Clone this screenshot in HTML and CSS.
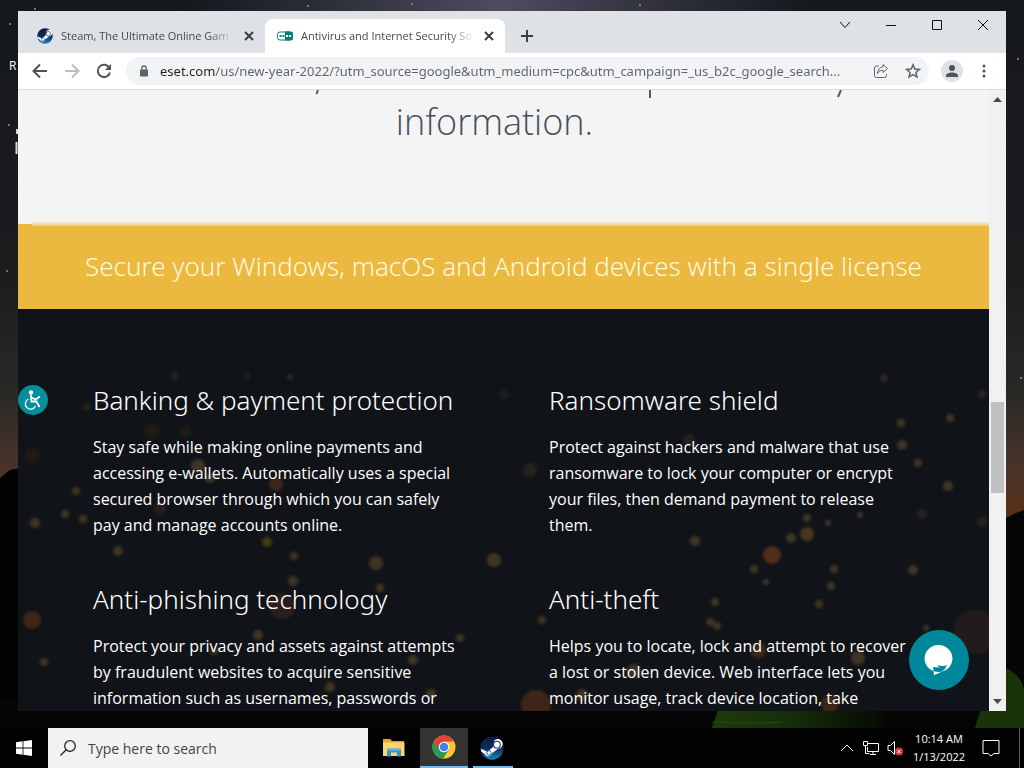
FILE: index.html
```html
<!DOCTYPE html>
<html lang="en">
<head>
    <meta charset="UTF-8">
    <meta name="viewport" content="width=device-width, initial-scale=1.0">
    <title>Antivirus and Internet Security</title>
    <link rel="stylesheet" href="styles.css">
</head>
<body>
    <div class="desktop">
        <!-- Wallpaper -->
        <svg class="wallpaper" viewBox="0 0 1024 768" preserveAspectRatio="none" aria-hidden="true">
            <defs>
                <linearGradient id="sky" x1="0" y1="0" x2="0" y2="1">
                    <stop offset="0" stop-color="#14171c"/>
                    <stop offset="0.35" stop-color="#1b1c1e"/>
                    <stop offset="0.52" stop-color="#2b2926"/>
                    <stop offset="0.61" stop-color="#49342a"/>
                    <stop offset="0.68" stop-color="#5a3013"/>
                </linearGradient>
                <linearGradient id="haze" x1="0" y1="0" x2="1" y2="0">
                    <stop offset="0" stop-color="#4a4658" stop-opacity="0"/>
                    <stop offset="0.5" stop-color="#504c60"/>
                    <stop offset="1" stop-color="#4a4658" stop-opacity="0"/>
                </linearGradient>
                <linearGradient id="tent" x1="0" y1="0" x2="1" y2="0">
                    <stop offset="0" stop-color="#1d3b09"/>
                    <stop offset="0.4" stop-color="#16300a"/>
                    <stop offset="1" stop-color="#060a04"/>
                </linearGradient>
            </defs>
            <rect width="1024" height="768" fill="url(#sky)"/>
            <rect x="180" width="640" height="11" fill="url(#haze)"/>
            <path d="M0 478 10 470 20 468V768H0Z" fill="#030303"/>
            <path d="M1006 518 1016 513 1024 510V768H0V700H1006Z" fill="#040504"/>
            <path d="M718 710H886V728H712Z" fill="url(#tent)"/>
            <path d="M712 722q40 2 70 0" stroke="#2c4a12" fill="none"/>
            <path d="M975 728Q985 690 1006 668Q1022 676 1024 690V728Z" fill="#1a3309"/>
            <g fill="#8d93a0">
                <circle cx="35" cy="9" r="1"/><circle cx="10" cy="24" r="1"/><circle cx="9" cy="125" r="1"/>
                <circle cx="308" cy="6" r="1"/><circle cx="412" cy="4" r="1"/><circle cx="640" cy="5" r="1"/>
                <circle cx="1018" cy="59" r="1"/><circle cx="7" cy="271" r="1"/><circle cx="1021" cy="378" r="1"/>
            </g>
            <path d="M17 129v5M16.500 142v12" stroke="#d8d8d8" stroke-width="2"/>
        </svg>
        <span class="desktop-label">R</span>

        <div class="window">
            <header class="tab-strip">
                <div class="tab">
                    <svg class="favicon" viewBox="0 0 32 32" aria-hidden="true"><use href="#steam"/></svg>
                    <button class="tab-title">Steam, The Ultimate Online Gam</button>
                    <button class="tab-close" aria-label="Close tab"><svg viewBox="0 0 10 10"><path d="M1 1l8 8M9 1L1 9"/></svg></button>
                </div>
                <div class="tab tab-active">
                    <svg class="favicon" viewBox="0 0 16 16" aria-hidden="true">
                        <rect x="0.500" y="4" width="15" height="8" rx="2.500" fill="#fff" stroke="#0b7f6e"/>
                        <path d="M8 3.500h5.500a2.500 2.500 0 0 1 2.500 2.500v4a2.500 2.500 0 0 1-2.500 2.500H8z" fill="#0b7f6e"/>
                        <path d="M2.500 8h2M5.500 8h2" stroke="#0b7f6e" stroke-width="2"/>
                        <path d="M9 8h2M12 8h2" stroke="#fff" stroke-width="2"/>
                    </svg>
                    <button class="tab-title">Antivirus and Internet Security So</button>
                    <button class="tab-close" aria-label="Close tab"><svg viewBox="0 0 10 10"><path d="M1 1l8 8M9 1L1 9"/></svg></button>
                </div>
                <button class="new-tab" aria-label="New tab"><svg viewBox="0 0 12 12"><path d="M6 0v12M0 6h12"/></svg></button>
                <div class="window-controls">
                    <button aria-label="Search tabs"><svg viewBox="0 0 12 12"><path d="M1 3l5 5.500L11 3"/></svg></button>
                    <button aria-label="Minimize"><svg viewBox="0 0 12 12"><path d="M1 6.500h10"/></svg></button>
                    <button aria-label="Maximize"><svg viewBox="0 0 12 12"><path d="M1.500 1.500h9v9h-9z"/></svg></button>
                    <button aria-label="Close"><svg viewBox="0 0 12 12"><path d="M1 1l10 10M11 1L1 11"/></svg></button>
                </div>
            </header>

            <div class="toolbar">
                <button class="tool" aria-label="Back"><svg viewBox="0 0 16 16"><path d="M15 8H2M8 1.500L1.500 8 8 14.500"/></svg></button>
                <button class="tool tool-disabled" aria-label="Forward"><svg viewBox="0 0 16 16"><path d="M1 8h13M8 1.500L14.500 8 8 14.500"/></svg></button>
                <button class="tool" aria-label="Reload"><svg viewBox="0 0 16 16"><path d="M13.500 5A6.200 6.200 0 1 0 14 9.500"/><path d="M15 1v6H9z" fill="#4f5357" stroke="none"/></svg></button>
                <div class="address">
                    <svg class="lock" viewBox="0 0 10 12" aria-hidden="true"><rect x="1" y="4.500" width="8" height="7" rx="1" fill="#5f6368"/><path d="M2.800 5V3.200a2.200 2.200 0 0 1 4.400 0V5" fill="none" stroke="#5f6368" stroke-width="1.300"/></svg>
                    <input class="address-input" type="text" aria-label="Address" value="eset.com/us/new-year-2022/?utm_source=google&amp;utm_medium=cpc&amp;utm_campaign=_us_b2c_google_search...">
                    <button class="address-btn" aria-label="Share"><svg viewBox="0 0 16 16"><path d="M6 3H3.500a2 2 0 0 0-2 2v7.500a2 2 0 0 0 2 2h8a2 2 0 0 0 2-2V11M10 1.500l4.500 4-4.500 4V7.300C7.500 7.300 5.800 8.300 4.500 10.500 4.800 7 6.500 4.200 10 3.700z"/></svg></button>
                    <button class="address-btn" aria-label="Bookmark"><svg viewBox="0 0 16 16"><path d="M8 1.800l1.800 4.200 4.600.4-3.500 3 1.100 4.500L8 11.500l-4 2.400 1.100-4.500-3.500-3L6.200 6z" stroke-width="1.500"/></svg></button>
                </div>
                <button class="profile" aria-label="Profile"><svg viewBox="0 0 14 14"><circle cx="7" cy="4" r="3"/><path d="M1 13v-1.500C1 9.500 4.500 8.500 7 8.500s6 1 6 3V13z"/></svg></button>
                <button class="menu" aria-label="Menu"><svg viewBox="0 0 4 14"><circle cx="2" cy="2" r="1.500"/><circle cx="2" cy="7" r="1.500"/><circle cx="2" cy="12" r="1.500"/></svg></button>
            </div>

            <div class="viewport">
                <main class="page">
                    <section class="intro">
                        <!-- Descenders of the line scrolled out of view -->
                        <svg class="intro-cut" width="600" height="8" viewBox="0 0 600 8" aria-hidden="true"><path d="M50 0l-1.500 4M382 0v8M573 0l-3 7" fill="none" stroke="#53595f" stroke-width="2"/></svg>
                        <p class="intro-text">information.</p>
                    </section>
                    <section class="banner">
                        <h2 class="banner-title">Secure your Windows, macOS and Android devices with a single license</h2>
                    </section>
                    <section class="features">
                        <svg class="bokeh" width="971" height="402" viewBox="18 309 971 402" aria-hidden="true">
                            <defs><filter id="soft" x="-50%" y="-50%" width="200%" height="200%"><feGaussianBlur stdDeviation="1.500"/></filter></defs>
                            <g filter="url(#soft)">
                                <g fill="#7b6038" fill-opacity="0.450">
                                    <circle cx="76" cy="491" r="4"/><circle cx="65" cy="514" r="4"/><circle cx="83" cy="519" r="4"/>
                                    <circle cx="35" cy="523" r="5"/><circle cx="118" cy="551" r="5"/><circle cx="267" cy="542" r="5" fill="#807000"/>
                                    <circle cx="294" cy="556" r="4"/><circle cx="293" cy="581" r="5"/><circle cx="44" cy="662" r="4"/>
                                    <circle cx="258" cy="635" r="5"/><circle cx="214" cy="651" r="4"/><circle cx="330" cy="687" r="5"/>
                                    <circle cx="198" cy="466" r="7"/><circle cx="210" cy="478" r="5"/><circle cx="247" cy="376" r="3" fill-opacity="0.200"/>
                                    <circle cx="290" cy="377" r="3" fill-opacity="0.300"/><circle cx="175" cy="376" r="4" fill-opacity="0.200"/><circle cx="87" cy="407" r="4" fill-opacity="0.200"/>
                                    <circle cx="380" cy="588" r="4"/><circle cx="460" cy="638" r="4"/><circle cx="413" cy="660" r="5"/>
                                    <circle cx="431" cy="694" r="5"/><circle cx="542" cy="620" r="4"/><circle cx="634" cy="671" r="7"/>
                                    <circle cx="582" cy="695" r="6"/><circle cx="695" cy="541" r="5"/><circle cx="766" cy="582" r="3"/>
                                    <circle cx="754" cy="569" r="4"/><circle cx="715" cy="602" r="4"/><circle cx="710" cy="622" r="4"/>
                                    <circle cx="717" cy="626" r="4"/><circle cx="819" cy="604" r="4"/><circle cx="831" cy="586" r="4"/>
                                    <circle cx="834" cy="569" r="4"/><circle cx="913" cy="570" r="5"/><circle cx="828" cy="523" r="3"/>
                                    <circle cx="807" cy="518" r="4"/><circle cx="791" cy="538" r="5"/><circle cx="807" cy="534" r="7" fill="#8b6521"/>
                                    <circle cx="860" cy="515" r="3"/><circle cx="922" cy="514" r="5" fill-opacity="0.200"/><circle cx="948" cy="486" r="5"/>
                                    <circle cx="918" cy="463" r="4"/><circle cx="901" cy="423" r="4"/><circle cx="902" cy="445" r="5"/>
                                    <circle cx="950" cy="418" r="4"/><circle cx="982" cy="394" r="4" fill-opacity="0.250"/><circle cx="884" cy="378" r="4" fill-opacity="0.250"/>
                                    <circle cx="926" cy="628" r="3"/><circle cx="858" cy="658" r="7"/><circle cx="982" cy="522" r="5" fill-opacity="0.200"/>
                                    <circle cx="494" cy="560" r="7"/><circle cx="376" cy="563" r="7"/><circle cx="530" cy="470" r="7" fill-opacity="0.200"/>
                                    <circle cx="430" cy="503" r="4" fill-opacity="0.250"/><circle cx="504" cy="395" r="5" fill-opacity="0.150"/><circle cx="689" cy="440" r="6" fill-opacity="0.200"/>
                                </g>
                                <g fill="#6b3a1c" fill-opacity="0.500">
                                    <circle cx="32" cy="620" r="9"/><circle cx="772" cy="555" r="9" fill-opacity="0.700"/><circle cx="282" cy="606" r="13" fill-opacity="0.300"/>
                                    <circle cx="536" cy="705" r="15"/><circle cx="160" cy="508" r="6" fill-opacity="0.300"/><circle cx="276" cy="484" r="7"/>
                                    <circle cx="152" cy="431" r="8" fill-opacity="0.150"/><circle cx="33" cy="455" r="8" fill-opacity="0.150"/><circle cx="186" cy="431" r="6" fill-opacity="0.150"/>
                                    <circle cx="758" cy="650" r="8"/><circle cx="830" cy="704" r="9"/><circle cx="975" cy="632" r="22" fill-opacity="0.200"/>
                                </g>
                            </g>
                        </svg>
                        <article class="feature">
                            <h3>Banking &amp; payment protection</h3>
                            <p>Stay safe while making online payments and<br>accessing e-wallets. Automatically uses a special<br>secured browser through which you can safely<br>pay and manage accounts online.</p>
                        </article>
                        <article class="feature">
                            <h3>Ransomware shield</h3>
                            <p>Protect against hackers and malware that use<br>ransomware to lock your computer or encrypt<br>your files, then demand payment to release<br>them.</p>
                        </article>
                        <article class="feature">
                            <h3>Anti-phishing technology</h3>
                            <p>Protect your privacy and assets against attempts<br>by fraudulent websites to acquire sensitive<br>information such as usernames, passwords or</p>
                        </article>
                        <article class="feature">
                            <h3>Anti-theft</h3>
                            <p>Helps you to locate, lock and attempt to recover<br>a lost or stolen device. Web interface lets you<br>monitor usage, track device location, take</p>
                        </article>
                    </section>
                </main>
                <div class="scrollbar">
                    <svg viewBox="0 0 9 5"><path d="M0 5l4.500-5L9 5z"/></svg>
                    <div class="scroll-track"><div class="scroll-thumb"></div></div>
                    <svg viewBox="0 0 9 5"><path d="M0 0l4.500 5L9 0z"/></svg>
                </div>
                <button class="access-btn" aria-label="Accessibility"><svg viewBox="0 0 30 30"><circle cx="13" cy="7.500" r="2.200" fill="#fff"/><path d="M13 10l.5 6.500h5l3 5.500M13.500 12.500l4 2 4.500-3" fill="none" stroke="#fff" stroke-width="1.800"/><path d="M10.500 14a5.300 5.300 0 1 0 7 7" fill="none" stroke="#fff" stroke-width="1.300"/></svg></button>
                <button class="chat-btn" aria-label="Chat"><svg viewBox="0 0 60 60"><path d="M30 15a14 13.500 0 1 1-1 0zM24 37l1 8q7-2 12-7z" fill="#fff"/><path d="M28.500 35q5 2 9.500 0-1 3.500-4.500 3.500T28.500 35z" fill="#00879a"/></svg></button>
            </div>
        </div>

        <footer class="taskbar">
            <button class="task-btn start" aria-label="Start"><svg viewBox="0 0 16 16"><path d="M0 2.200L6.600 1.300V7.600H0zM7.400 1.200L16 0V7.600H7.400zM0 8.400H6.600V14.700L0 13.800zM7.400 8.400H16V16L7.400 14.800z"/></svg></button>
            <label class="search">
                <svg viewBox="0 0 16 16" aria-hidden="true"><circle cx="10" cy="6" r="5.300"/><path d="M6.200 9.800L0.500 15.500"/></svg>
                <input type="search" placeholder="Type here to search" aria-label="Type here to search">
            </label>
            <div class="apps">
                <button class="task-btn" aria-label="File Explorer"><svg viewBox="-1 -1 24 22"><path d="M0 1h7l2 2h12v15H0z" fill="#e5a52c"/><path d="M0 4.500h21.500V18H0z" fill="#fbd668"/><path d="M4 18.500v-8h14v8h-4v-4H8v4z" fill="#3d8fc4"/><path d="M4 10.500h14v2H4z" fill="#6eb5dc"/></svg></button>
                <button class="task-btn task-active" aria-label="Chrome">
                    <svg viewBox="0 0 24 24"><circle cx="12" cy="12" r="11.500" fill="#fbc730"/><path d="M12 12L2 6.300A11.500 11.500 0 0 0 11 23.400L17 14.500z" fill="#279c50"/><path d="M2 6.300A11.500 11.500 0 0 1 22 6.500H12L7 14.800z" fill="#df4436"/><circle cx="12" cy="12" r="5.300" fill="#fff"/><circle cx="12" cy="12" r="4.300" fill="#3f82ee"/></svg>
                </button>
                <button class="task-btn task-open" aria-label="Steam">
                    <svg viewBox="0 0 32 32">
                        <defs><linearGradient id="steam-bg" x1="0" y1="0" x2="0" y2="1"><stop offset="0" stop-color="#101b3d"/><stop offset="0.500" stop-color="#0d2b5c"/><stop offset="1" stop-color="#1b85bd"/></linearGradient></defs>
                        <g id="steam"><circle cx="16" cy="16" r="15.500" fill="url(#steam-bg)"/><path d="M1 17l9 4 7-6 2-9a6.500 6.500 0 1 1 5 11l-8 6a5 5 0 0 1-9.500 1L2 21z" fill="#fff"/><circle cx="22.500" cy="11.500" r="4.500" fill="#fff" stroke="#1b3565" stroke-width="1.500"/><circle cx="12" cy="22.500" r="3" fill="none" stroke="#1b4f85" stroke-width="1.200"/></g>
                    </svg>
                </button>
            </div>
            <div class="tray">
                <svg viewBox="0 0 16 16"><path d="M2 11l6-6 6 6"/></svg>
                <svg viewBox="0 0 16 16"><path d="M5 3.500h10.500v8H4.500V7M.5 1.500h4v4h-4zM2.500 5.500v8h4M10 11.500v3M7 14.500h6"/></svg>
                <svg viewBox="0 0 16 16"><path d="M1 5.500h2.500l4-4v13l-4-4H1z"/><circle cx="12" cy="11.500" r="4" fill="#d6303a" stroke="none"/><path d="M10.300 9.800l3.400 3.400M13.700 9.800l-3.400 3.400"/></svg>
                <div class="clock"><span>10:14 AM</span><span>1/13/2022</span></div>
                <button class="notify" aria-label="Notifications"><svg viewBox="0 0 18 18"><path d="M1 1.500h16v13h-5L9 17l-3-2.500H1z"/></svg></button>
                <span class="show-desktop"></span>
            </div>
        </footer>
    </div>
</body>
</html>
```
FILE: styles.css
```css
* {
    box-sizing: border-box;
}

body {
    margin: 0;
    font-family: "Open Sans", "Noto Sans", sans-serif;
}

button,
input {
    font-family: inherit;
    border: none;
    background: none;
    padding: 0;
    margin: 0;
    outline: none;
}

button {
    display: flex;
    align-items: center;
    justify-content: center;
}

.desktop {
    position: relative;
    display: flex;
    flex-direction: column;
    height: 100vh;
    overflow: hidden;
    background: #040504;
}

.wallpaper {
    position: absolute;
    width: 100%;
    height: 100%;
}

.desktop-label {
    position: absolute;
    left: 9px;
    top: 58px;
    font-size: 12px;
    line-height: 16px;
    color: #fff;
}

/* Browser window */
.window {
    position: relative;
    flex: 1;
    min-height: 0;
    margin: 11px 18px 17px;
    display: flex;
    flex-direction: column;
    background: #fff;
}

.tab-strip {
    display: flex;
    align-items: flex-end;
    height: 42px;
    padding-left: 7px;
    background: #dee1e6;
}

.tab {
    display: flex;
    align-items: center;
    width: 240px;
    height: 34px;
    padding: 0 9px 0 12px;
}

.tab-active {
    background: #fff;
    border-radius: 8px 8px 0 0;
}

.favicon {
    flex: none;
    width: 16px;
    height: 16px;
    margin-right: 8px;
}

.tab-title {
    flex: 1;
    min-width: 0;
    justify-content: flex-start;
    white-space: nowrap;
    font-size: 11px;
    line-height: 20px;
    color: #45494d;
    -webkit-mask-image: linear-gradient(to right, #000 85%, transparent 100%);
    mask-image: linear-gradient(to right, #000 85%, transparent 100%);
}

.tab-close {
    width: 14px;
    height: 14px;
    margin-left: 8px;
}

.tab-close svg {
    width: 10px;
    height: 10px;
    stroke: #3c4043;
    stroke-width: 2;
}

.new-tab {
    width: 28px;
    height: 34px;
    margin-left: 8px;
}

.new-tab svg {
    width: 12px;
    height: 12px;
    stroke: #3c4043;
    stroke-width: 2;
}

.window-controls {
    display: flex;
    align-self: flex-start;
    margin-left: auto;
}

.window-controls button {
    width: 46px;
    height: 28px;
}

.window-controls svg {
    width: 12px;
    height: 12px;
    fill: none;
    stroke: #111;
}

.toolbar {
    display: flex;
    align-items: center;
    height: 37px;
    padding: 0 10px 0 6px;
    border-bottom: 1px solid #dadce0;
    background: #fff;
}

.tool {
    width: 32px;
    height: 32px;
}

.tool svg {
    width: 16px;
    height: 16px;
    fill: none;
    stroke: #4f5357;
    stroke-width: 2;
}

.tool-disabled svg {
    stroke: #bcbec1;
}

.address {
    flex: 1;
    display: flex;
    align-items: center;
    height: 28px;
    margin: 0 12px 0 6px;
    padding: 0 0 0 13px;
    border-radius: 14px;
    background: #f1f3f4;
}

.lock {
    width: 10px;
    height: 12px;
    margin-right: 11px;
}

.address-input {
    flex: 1;
    min-width: 0;
    height: 28px;
    font-family: "Noto Sans", sans-serif;
    font-size: 13px;
    color: transparent;
    background: linear-gradient(to right, #202124 55px, #5f6368 55px);
    -webkit-background-clip: text;
    background-clip: text;
}

.address-btn {
    width: 32px;
    height: 28px;
}

.address-btn svg {
    width: 16px;
    height: 16px;
    fill: none;
    stroke: #5f6368;
}

.profile {
    width: 22px;
    height: 22px;
    margin-right: 9px;
    border-radius: 50%;
    background: #dee1e6;
}

.profile svg {
    width: 14px;
    height: 14px;
    fill: #4f5357;
}

.menu {
    width: 24px;
    height: 28px;
}

.menu svg {
    width: 4px;
    height: 14px;
    fill: #4f5357;
}

/* Page */
.viewport {
    position: relative;
    flex: 1;
    min-height: 0;
    display: flex;
}

.page {
    flex: 1;
    display: flex;
    flex-direction: column;
    overflow: hidden;
    background: #f4f4f4;
}

.intro {
    position: relative;
    padding: 8px 18px 78px 0;
    text-align: center;
}

.intro-cut {
    position: absolute;
    top: 0;
    left: 250px;
}

.intro-text {
    margin: 0;
    font-size: 36px;
    font-weight: 300;
    line-height: 48px;
    color: #45505a;
}

.banner {
    position: relative;
    padding: 22px 0 23px;
    background: #ebb93f;
}

.banner::before {
    content: "";
    position: absolute;
    top: -2px;
    left: 14px;
    right: 0;
    height: 4px;
    background: linear-gradient(#f7e7dc, #eecb75);
}

.banner-title {
    margin: 0;
    font-family: "Noto Sans", sans-serif;
    font-size: 26px;
    font-weight: 300;
    line-height: 40px;
    text-align: center;
    white-space: nowrap;
    color: #fff8dc;
}

.features {
    position: relative;
    flex: 1;
    display: grid;
    grid-template-columns: 1fr 1fr;
    align-content: start;
    row-gap: 41px;
    padding: 71px 0 0 75px;
    column-gap: 16px;
    background: #101318;
    color: #fff;
}

.bokeh {
    position: absolute;
    top: 0;
    left: 0;
}

.feature {
    position: relative;
    white-space: nowrap;
}

.feature h3 {
    margin: 0 0 14px;
    font-family: "Noto Sans", sans-serif;
    font-size: 26px;
    font-weight: 300;
    line-height: 40px;
}

.feature p {
    margin: 0;
    font-size: 16px;
    line-height: 26px;
}

.scrollbar {
    width: 17px;
    display: flex;
    flex-direction: column;
    align-items: center;
    padding: 7px 0;
    background: #f1f1f1;
}

.scrollbar svg {
    width: 9px;
    height: 5px;
    fill: #4b4b4b;
}

.scroll-track {
    flex: 1;
    width: 13px;
}

.scroll-thumb {
    height: 91px;
    margin-top: 300px;
    background: #c1c1c1;
}

.access-btn {
    position: absolute;
    left: 0;
    top: 295px;
    width: 30px;
    height: 30px;
    border-radius: 50%;
    background: #058d9b;
}

.access-btn svg {
    width: 30px;
    height: 30px;
}

.chat-btn {
    position: absolute;
    right: 37px;
    bottom: 21px;
    width: 60px;
    height: 60px;
    border-radius: 50%;
    background: #00879a;
}

.chat-btn svg {
    width: 60px;
    height: 60px;
}

/* Taskbar */
.taskbar {
    position: relative;
    display: flex;
    height: 40px;
    background: #020202;
    color: #fff;
}

.task-btn {
    width: 48px;
    height: 40px;
}

.task-btn svg {
    width: 24px;
    height: 24px;
}

.start svg {
    width: 16px;
    height: 16px;
    fill: #fff;
}

.search {
    display: flex;
    align-items: center;
    width: 320px;
    padding: 0 12px;
    background: #f2f2f2;
}

.search svg {
    width: 16px;
    height: 16px;
    margin-right: 12px;
    fill: none;
    stroke: #222;
    stroke-width: 1.3;
}

.search input {
    flex: 1;
    min-width: 0;
    font-size: 14px;
}

.search input::placeholder {
    color: #444;
    opacity: 1;
}

.apps {
    display: flex;
    gap: 2px;
    padding-left: 2px;
}

.task-active {
    background: #333;
    border-bottom: 2px solid #76b9ed;
}

.task-open {
    position: relative;
    width: 44px;
}

.task-open::after {
    content: "";
    position: absolute;
    left: 3px;
    right: 1px;
    bottom: 0;
    height: 2px;
    background: #76b9ed;
}

.tray {
    display: flex;
    align-items: center;
    gap: 8px;
    margin-left: auto;
}

.tray svg {
    width: 16px;
    height: 16px;
    fill: none;
    stroke: #fff;
}

.clock {
    display: flex;
    flex-direction: column;
    align-items: center;
    width: 56px;
    font-size: 11px;
    line-height: 18px;
}

.notify {
    width: 32px;
    height: 40px;
    margin-right: 4px;
}

.tray .notify svg {
    width: 18px;
    height: 18px;
}

.show-desktop {
    width: 5px;
    height: 40px;
    border-left: 1px solid #5a5a5a;
}
```
